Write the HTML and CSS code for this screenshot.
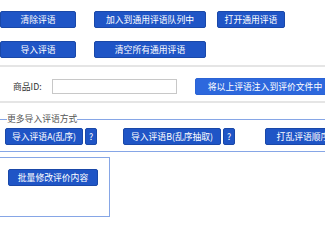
FILE: index.html
```html
<!DOCTYPE html>
<html lang="zh">
<head>
<meta charset="utf-8">
<link rel="stylesheet" href="styles.css">
</head>
<body>
<div class="page">
  <div class="grid">
    <button class="btn">清除评语</button>
    <button class="btn">加入到通用评语队列中</button>
    <button class="btn">打开通用评语</button>
    <button class="btn">导入评语</button>
    <button class="btn">清空所有通用评语</button>
  </div>
  <div class="sep"></div>
  <div class="idrow">
    <label class="lbl">商品ID:</label>
    <input class="inp" type="text">
    <button class="btn btn-light inject">将以上评语注入到评价文件中</button>
  </div>
  <div class="sep sep2"></div>
  <fieldset class="more">
    <legend>更多导入评语方式</legend>
    <div class="morerow">
      <button class="btn w-a">导入评语A(乱序)</button>
      <button class="btn q">?</button>
      <button class="btn w-b gap-l">导入评语B(乱序抽取)</button>
      <button class="btn q">?</button>
      <button class="btn w-c gap-l2">打乱评语顺序</button>
    </div>
  </fieldset>
  <div class="box">
    <button class="btn w-d">批量修改评价内容</button>
  </div>
</div>
</body>
</html>
```
FILE: styles.css
```css
html, body {
  margin: 0;
  padding: 0;
  background: #fff;
  overflow: hidden;
}
body {
  font-family: "Noto Sans CJK SC", "Noto Sans", sans-serif;
  font-size: 9px;
  color: #333;
}
.page {
  width: 340px;
  padding-top: 11px;
}
.btn {
  box-sizing: border-box;
  height: 17px;
  padding: 0;
  margin: 0;
  background: #1f55c6;
  border: 1px solid #1a48a8;
  border-radius: 2px;
  color: #fff;
  font-family: "Noto Sans CJK SC", "Noto Sans", sans-serif;
  font-size: 8.8px;
  line-height: 15px;
  white-space: nowrap;
}
.btn-light {
  background: #2d68dd;
  border-color: #2b63d4;
}
.grid {
  display: grid;
  grid-template-columns: 76px 112px 61px;
  column-gap: 18px;
  row-gap: 13px;
}
.grid .btn:nth-child(3) {
  margin-left: -7px;
}
.sep {
  height: 2px;
  background: #e5e5e5;
  margin-top: 7px;
}
.sep2 {
  margin-top: 6px;
}
.idrow {
  display: flex;
  align-items: center;
  margin-top: 11px;
  height: 17px;
}
.lbl {
  width: 39px;
  padding-left: 13px;
  color: #333;
  font-size: 8.8px;
}
.inp {
  box-sizing: border-box;
  width: 125px;
  height: 15px;
  border: 1px solid #c8c8c8;
  padding: 0;
  margin: 0;
}
.inject {
  width: 140px;
  margin-left: 18px;
}
.more {
  margin: 10px 0 0 -2px;
  padding: 3px 0 6px 7px;
  width: 319px;
  border: 1px solid #86a6e6;
  border-left-width: 0;
  border-radius: 0;
}
.more legend {
  padding: 0;
  margin-left: 2px;
  color: #555;
  font-size: 8.8px;
  line-height: 12px;
}
.morerow {
  display: flex;
  gap: 2px;
}
.w-a { width: 78px; }
.q { width: 12px; }
.w-b { width: 98px; }
.w-c { width: 76px; }
.gap-l { margin-left: 24px; }
.gap-l2 { margin-left: 28px; }
.box {
  margin-top: 5px;
  width: 110px;
  height: 60px;
  box-sizing: border-box;
  border: 1px solid #86a6e6;
  border-left-width: 0;
  padding: 11px 0 0 8px;
}
.w-d { width: 90px; }
```
